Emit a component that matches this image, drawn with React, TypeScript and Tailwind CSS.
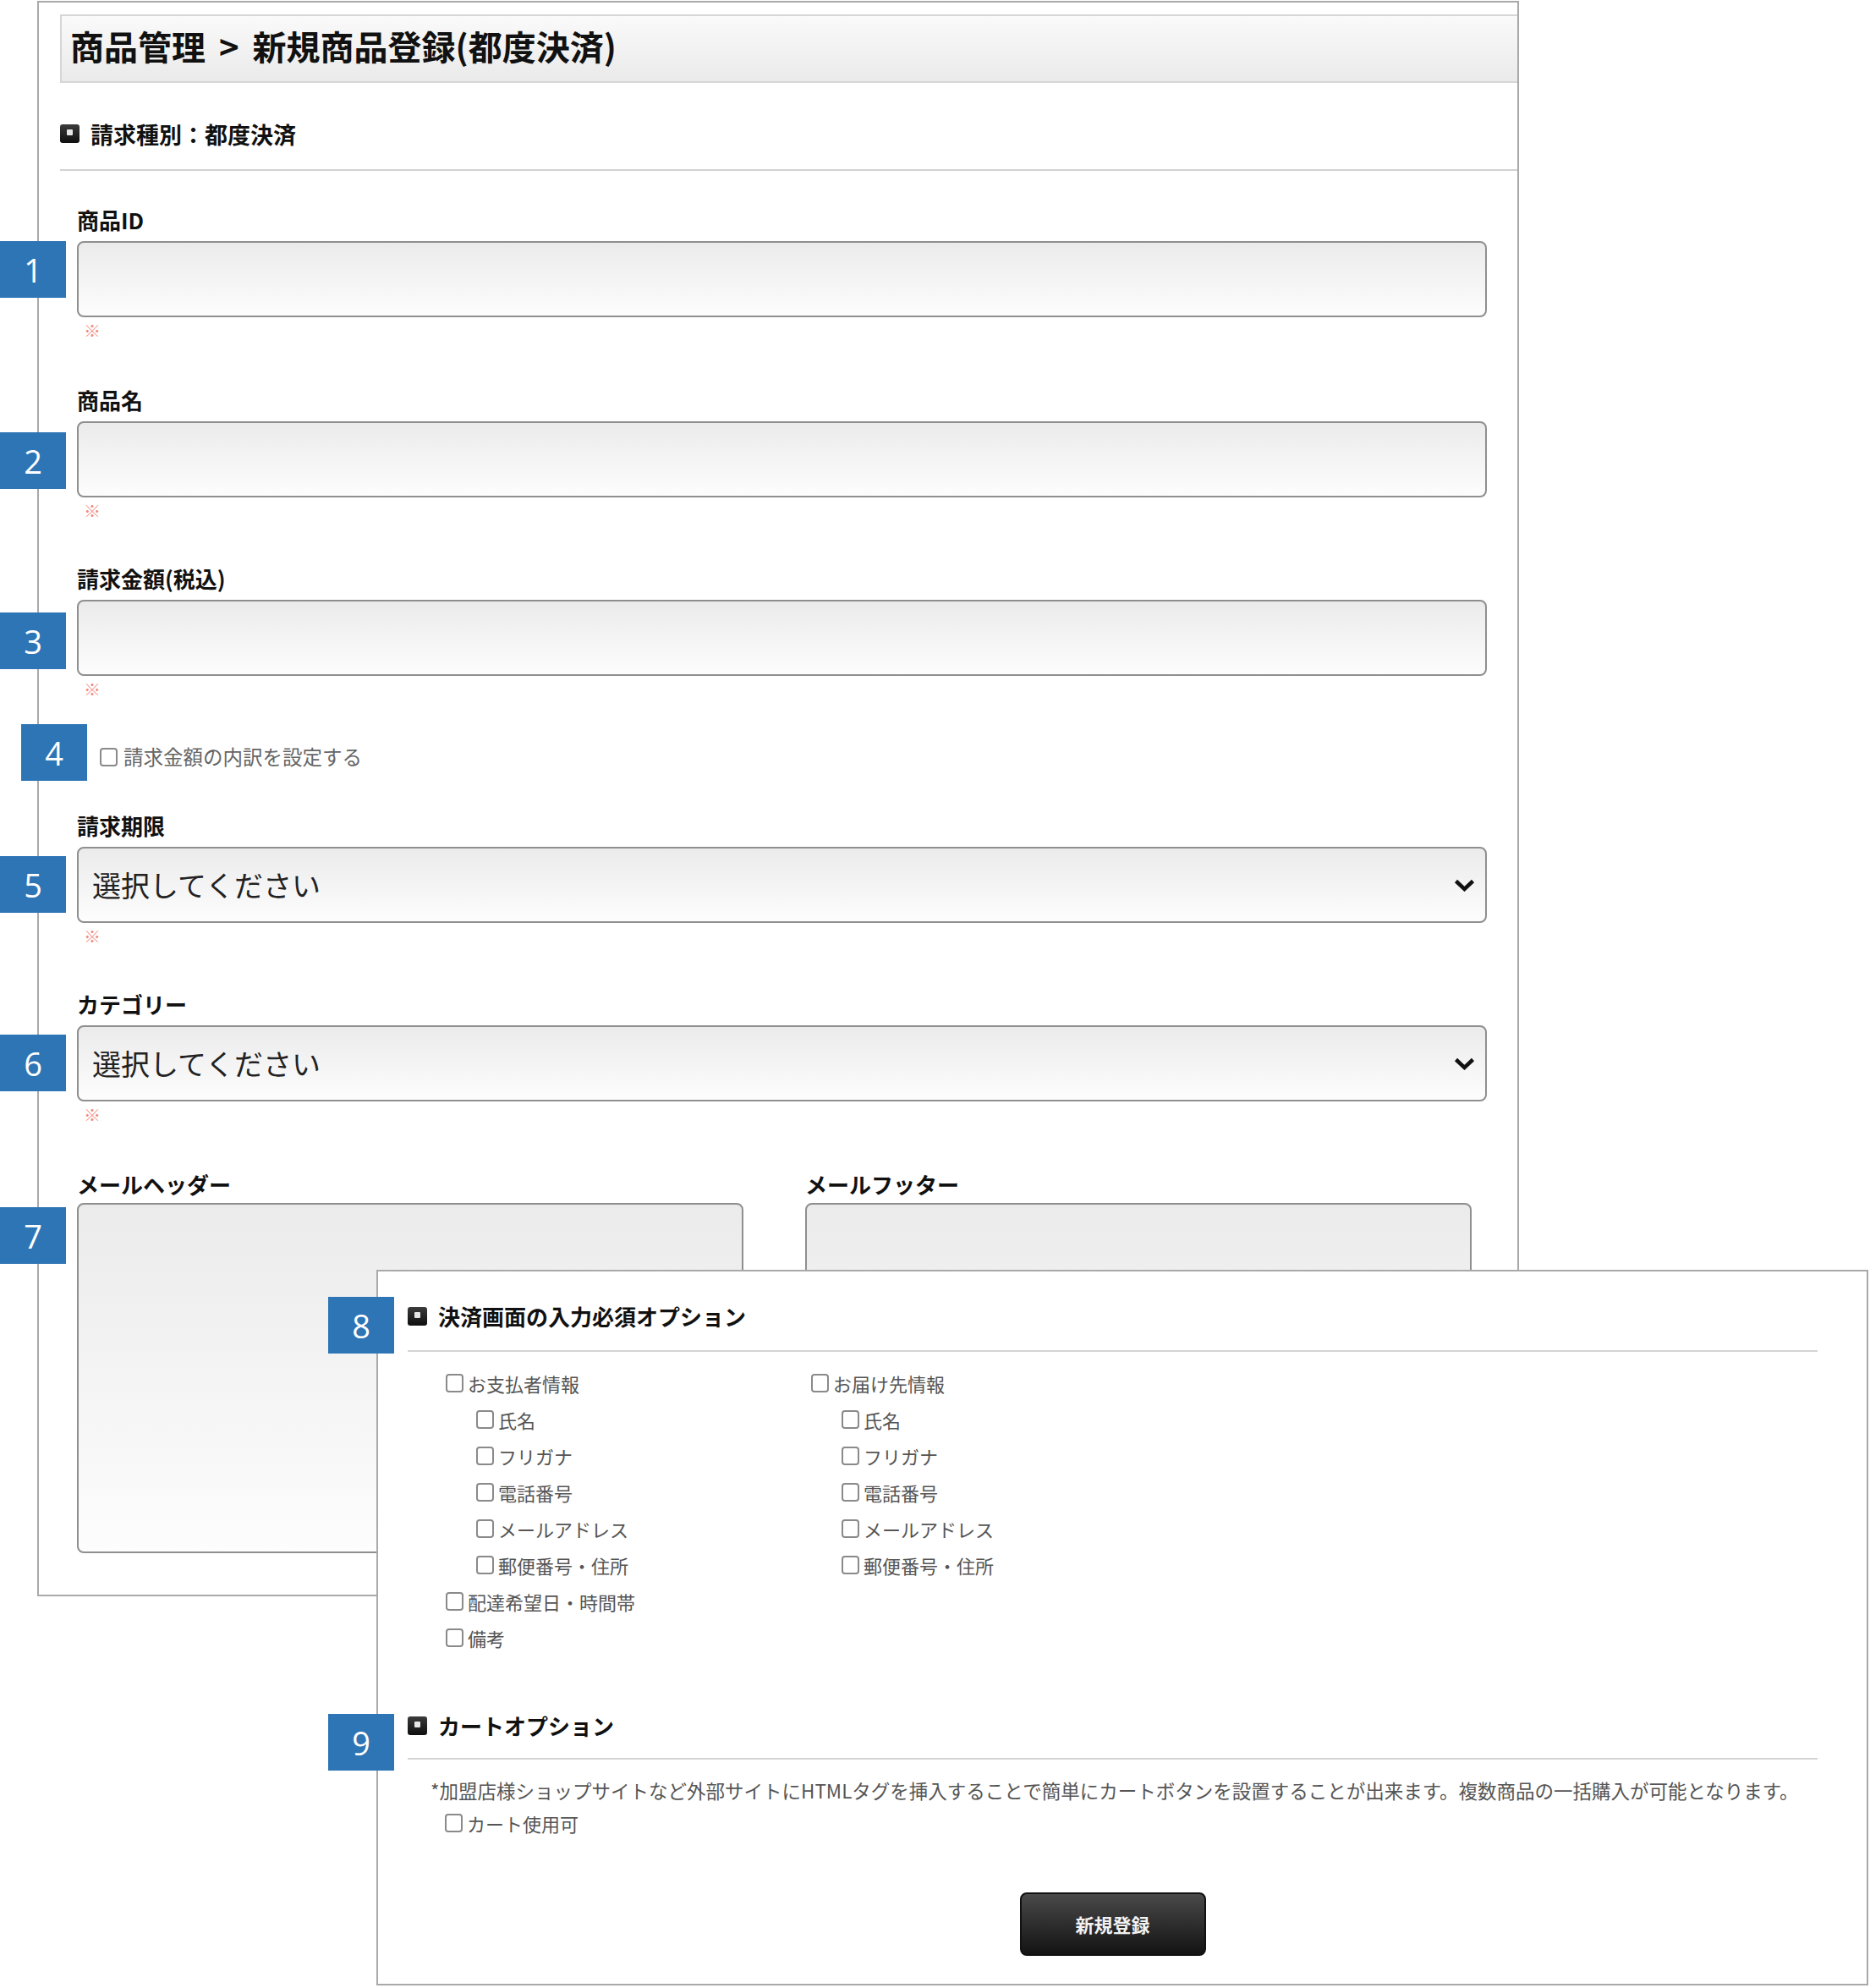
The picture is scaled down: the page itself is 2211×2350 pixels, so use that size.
import React from 'react';

const jp = "font-['Noto_Sans_CJK_JP','Noto_Sans_CJK_SC',sans-serif]";

const inputCls =
  'h-[90px] w-full rounded-[8px] border-2 border-[#8f8f8f] bg-gradient-to-b from-[#ebebeb] to-[#fdfdfd]';

const Badge: React.FC<{ n: number; pos: string }> = ({ n, pos }) => (
  <div
    className={`absolute flex h-[67px] w-[78px] items-center justify-center bg-[#2e75b6] font-['Open_Sans','Noto_Sans',sans-serif] text-[38px] leading-none text-white ${pos}`}
  >
    {n}
  </div>
);

// dark square bullet used before section titles
const SquareIcon: React.FC = () => (
  <span className="flex h-[22px] w-[23px] shrink-0 justify-center rounded-[3px] bg-gradient-to-b from-[#3c3c3c] to-[#0f0f0f] pt-[6px]">
    <span className="h-[7px] w-[7px] rounded-[1px] bg-[#e6e6e6]" />
  </span>
);

const SectionTitle: React.FC<{ children: React.ReactNode; large?: boolean }> = ({ children, large }) => (
  <div className="flex h-[32px] items-center gap-[13px]">
    <SquareIcon />
    <span className={`${large ? 'text-[27px]' : 'text-[26px]'} font-bold leading-none text-[#111]`}>{children}</span>
  </div>
);

const Box: React.FC = () => (
  <span className="h-[22px] w-[21px] shrink-0 rounded-[4px] border-2 border-[#8a8a8a] bg-white" />
);

const Check: React.FC<{ label: string; indent?: boolean }> = ({ label, indent }) => (
  <div className={`flex h-[43px] items-center gap-[5px] ${indent ? 'pl-[36px]' : ''}`}>
    <Box />
    <span className="text-[22px] leading-none text-[#555]">{label}</span>
  </div>
);

const Chevron: React.FC = () => (
  <svg width="25" height="15" viewBox="0 0 25 15" className="mr-[12px] shrink-0">
    <polyline points="2.5,2.5 12.5,12 22.5,2.5" fill="none" stroke="#111" strokeWidth="4.5" />
  </svg>
);

const Field: React.FC<{ label: string; select?: boolean; className?: string }> = ({
  label,
  select,
  className = '',
}) => (
  <div className={className}>
    <div className="h-[30px] text-[26px] font-bold leading-[30px] text-[#111]">{label}</div>
    <div className={`mt-[10px] flex items-center justify-between ${inputCls}`}>
      {select && (
        <>
          <span className="pl-[16px] text-[34px] leading-none text-[#222]">選択してください</span>
          <Chevron />
        </>
      )}
    </div>
    <div className="mt-[3px] h-[26px] pl-[8px] text-[20px] leading-[26px] text-[#f28b82]">※</div>
  </div>
);

const SUBS = ['氏名', 'フリガナ', '電話番号', 'メールアドレス', '郵便番号・住所'];

export default function App() {
  return (
    <div className={`relative h-[2350px] w-[2211px] overflow-hidden bg-white ${jp}`}>
      {/* Main form panel */}
      <div className="ml-[44px] mt-[1px] h-[1886px] w-[1752px] border-2 border-[#a9a9a9] pl-[25px] pt-[14px]">
        <div className="flex h-[81px] items-center border-y-2 border-l-2 border-[#d6d6d6] bg-gradient-to-b from-[#fafafa] to-[#eaeaea] pb-[8px] pl-[10px]">
          <h1 className="text-[40px] font-bold leading-none text-[#111]">
            商品管理<span className="mx-[16px]">&gt;</span>新規商品登録(都度決済)
          </h1>
        </div>

        <div className="mt-[44px]">
          <SectionTitle large>請求種別：都度決済</SectionTitle>
        </div>
        <div className="mt-[26px] border-t-2 border-[#d2d2d2]" />

        <div className="pl-[20px] pr-[36px]">
          <Field label="商品ID" className="mt-[43px]" />
          <Field label="商品名" className="mt-[54px]" />
          <Field label="請求金額(税込)" className="mt-[52px]" />

          <div className="mt-[52px] flex h-[30px] items-center gap-[7px] pl-[27px]">
            <Box />
            <span className="text-[23.5px] leading-none text-[#666]">請求金額の内訳を設定する</span>
          </div>

          <Field label="請求期限" select className="mt-[51px]" />
          <Field label="カテゴリー" select className="mt-[52px]" />

          <div className="mt-[54px] flex gap-[73px]">
            <div className="w-[788px]">
              <div className="h-[30px] text-[26px] font-bold leading-[30px] text-[#111]">メールヘッダー</div>
              <div className="mt-[7px] h-[414px] rounded-[8px] border-2 border-[#8f8f8f] bg-gradient-to-b from-[#ebebeb] to-[#fdfdfd]" />
            </div>
            <div className="w-[788px]">
              <div className="h-[30px] text-[26px] font-bold leading-[30px] text-[#111]">メールフッター</div>
              <div className="mt-[7px] h-[414px] rounded-[8px] border-2 border-[#8f8f8f] bg-gradient-to-b from-[#ebebeb] to-[#fdfdfd]" />
            </div>
          </div>
        </div>
      </div>

      {/* Options panel laid over the form */}
      <div className="absolute left-[445px] top-[1501px] h-[846px] w-[1764px] border-2 border-[#a9a9a9] bg-white pl-[35px] pr-[58px] pt-[37px]">
        <SectionTitle>決済画面の入力必須オプション</SectionTitle>
        <div className="mt-[24px] border-t-2 border-[#d4d4d4]" />

        <div className="mt-[15px] flex pl-[45px]">
          <div className="w-[432px]">
            <Check label="お支払者情報" />
            {SUBS.map((s) => (
              <Check key={s} label={s} indent />
            ))}
            <Check label="配達希望日・時間帯" />
            <Check label="備考" />
          </div>
          <div>
            <Check label="お届け先情報" />
            {SUBS.map((s) => (
              <Check key={s} label={s} indent />
            ))}
          </div>
        </div>

        <div className="mt-[67px]">
          <SectionTitle>カートオプション</SectionTitle>
        </div>
        <div className="mt-[22px] border-t-2 border-[#d4d4d4]" />

        <p className="mt-[21px] whitespace-nowrap pl-[27px] text-[22.5px] leading-[30px] text-[#555]">
          *加盟店様ショップサイトなど外部サイトにHTMLタグを挿入することで簡単にカートボタンを設置することが出来ます。複数商品の一括購入が可能となります。
        </p>
        <div className="mt-[2px] pl-[44px]">
          <Check label="カート使用可" />
        </div>

        <div className="mt-[61px] flex justify-center">
          <button className="flex h-[75px] w-[220px] items-center justify-center rounded-[8px] border-2 border-[#111] bg-gradient-to-b from-[#4a4a4a] to-[#141414] text-[22px] font-bold text-[#f2f2f2]">
            新規登録
          </button>
        </div>
      </div>

      {/* Numbered annotation badges */}
      <Badge n={1} pos="left-0 top-[285px]" />
      <Badge n={2} pos="left-0 top-[511px]" />
      <Badge n={3} pos="left-0 top-[724px]" />
      <Badge n={4} pos="left-[25px] top-[856px]" />
      <Badge n={5} pos="left-0 top-[1012px]" />
      <Badge n={6} pos="left-0 top-[1223px]" />
      <Badge n={7} pos="left-0 top-[1427px]" />
      <Badge n={8} pos="left-[388px] top-[1533px]" />
      <Badge n={9} pos="left-[388px] top-[2026px]" />
    </div>
  );
}
